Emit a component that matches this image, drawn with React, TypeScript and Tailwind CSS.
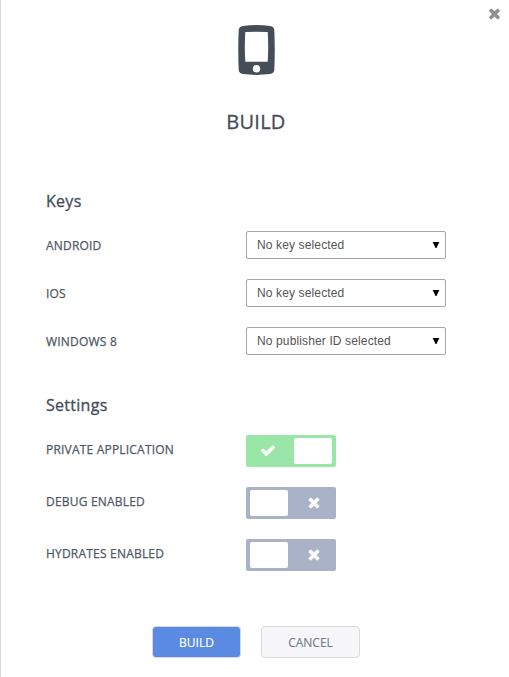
import type { ReactNode } from "react";

const CHECK =
  "M1671 566q0 40-28 68l-724 724-136 136q-28 28-68 28t-68-28l-136-136-362-362q-28-28-28-68t28-68l136-136q28-28 68-28t68 28l294 295 656-657q28-28 68-28t68 28l136 136q28 28 28 68z";
const CROSS =
  "M1490 1322q0 40-28 68l-136 136q-28 28-68 28t-68-28l-294-294-294 294q-28 28-68 28t-68-28l-136-136q-28-28-28-68t28-68l294-294-294-294q-28-28-28-68t28-68l136-136q28-28 68-28t68 28l294 294 294-294q28-28 68-28t68 28l136 136q28 28 28 68t-28 68l-294 294 294 294q28 28 28 68z";

function Glyph({ d, viewBox = "0 64 1792 1792" }: { d: string; viewBox?: string }) {
  return (
    <svg viewBox={viewBox} fill="currentColor" stroke="currentColor" strokeWidth="30" className="size-4" aria-hidden="true">
      <path d={d} />
    </svg>
  );
}

function Row({ label, className, children }: { label: string; className: string; children: ReactNode }) {
  return (
    <div className={`flex ${className}`}>
      <span className="w-[200px] pt-[6px] text-xs leading-[18px] tracking-[0.2px] text-[#4f5866] [-webkit-text-stroke:0.25px_#4f5866]">
        {label}
      </span>
      {children}
    </div>
  );
}

function Heading({ children }: { children: ReactNode }) {
  return (
    <h2 className="h-6 text-base leading-6 tracking-[0.28px] text-[#454c58] [-webkit-text-stroke:0.3px_#454c58]">
      {children}
    </h2>
  );
}

function Select({ value }: { value: string }) {
  return (
    <button className="flex h-7 w-[200px] items-center justify-between rounded-[2px] border border-[#a6a6a6] bg-white pr-[5px] pl-[10px] font-['Liberation_Sans',sans-serif] text-xs text-[#555555]">
      <span className="tracking-[0.13px]">{value}</span>
      <svg viewBox="0 0 8 6" className="h-[6px] w-2" aria-hidden="true">
        <path d="M0.700 0H7.300L4.500 6H3.500Z" fill="#000" />
      </svg>
    </button>
  );
}

function Toggle({ on = false }: { on?: boolean }) {
  return (
    <button
      role="switch"
      aria-checked={on}
      className={`flex h-8 w-[90px] items-center rounded-[2px] px-1 text-white ${on ? "flex-row-reverse bg-[#9ae6a9]" : "bg-[#a9b2c6]"}`}
    >
      <span className="h-[26px] w-[38px] rounded-[2px] bg-white" />
      <span className={`flex flex-1 justify-center ${on ? "pr-2" : "pl-2"}`}>
        <Glyph d={on ? CHECK : CROSS} />
      </span>
    </button>
  );
}

export default function App() {
  return (
    <main className="relative h-[677px] w-[509px] overflow-hidden border-l border-[#d9d9d9] bg-white font-['Open_Sans','Noto_Sans',sans-serif]">
      <button aria-label="Close" className="absolute top-[6px] left-[485px] text-[#8d9094]">
        <Glyph d={CROSS} viewBox="-56 64 1792 1792" />
      </button>
      <header className="flex w-[510px] flex-col items-center pt-[25px]">
        <svg viewBox="0 0 37 50" className="h-[50px] w-[37px]" aria-hidden="true">
          <path
            fill="#454d59"
            fillRule="evenodd"
            d="M5 1Q18.5-.8 32 1Q36 1.500 36.300 5Q37.200 25 36.300 45Q36 48.500 32 49.100Q18.500 50.700 5 49.100Q1 48.500.7 45Q-.2 25 .7 5Q1 1.500 5 1ZM7.300 7Q6.300 22 7.300 36.800H29.700Q30.700 22 29.700 7Q18.500 6.500 7.300 7ZM18.500 40A3.700 3.700 0 1 0 18.500 47.400A3.700 3.700 0 1 0 18.500 40Z"
          />
        </svg>
        <h1 className="mt-8 text-xl leading-[30px] tracking-[0.25px] text-[#454c58] [-webkit-text-stroke:0.3px_#454c58]">BUILD</h1>
      </header>
      <section className="mt-[52px] pl-[45px]">
        <Heading>Keys</Heading>
        <div className="mt-[18px] flex flex-col gap-5">
          <Row label="ANDROID" className="h-7"><Select value="No key selected" /></Row>
          <Row label="IOS" className="h-7"><Select value="No key selected" /></Row>
          <Row label="WINDOWS 8" className="h-7"><Select value="No publisher ID selected" /></Row>
        </div>
      </section>
      <section className="mt-[38px] pl-[45px]">
        <Heading>Settings</Heading>
        <div className="mt-[18px] flex flex-col gap-5">
          <Row label="PRIVATE APPLICATION" className="h-8"><Toggle on /></Row>
          <Row label="DEBUG ENABLED" className="h-8"><Toggle /></Row>
          <Row label="HYDRATES ENABLED" className="h-8"><Toggle /></Row>
        </div>
      </section>
      <footer className="mt-[55px] flex gap-5 pl-[151px] text-xs">
        <button className="h-8 w-[89px] rounded-[4px] border border-[#d6d8de] bg-[#5a8ae2] pt-0.5 text-white [-webkit-text-stroke:0.15px_#fff]">BUILD</button>
        <button className="h-8 w-[99px] rounded-[4px] border border-[#dadbdd] bg-[#f7f7fa] pt-0.5 text-[#737c8c] [-webkit-text-stroke:0.15px_#737c8c]">CANCEL</button>
      </footer>
    </main>
  );
}
